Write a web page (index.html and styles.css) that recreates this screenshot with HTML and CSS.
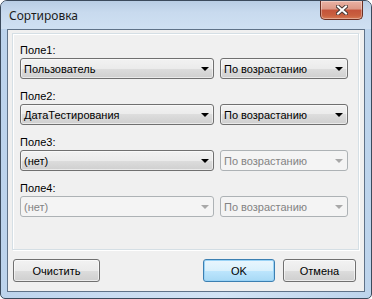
FILE: index.html
```html
<!DOCTYPE html>
<html lang="ru">
<head>
    <meta charset="UTF-8">
    <title>Сортировка</title>
    <link rel="stylesheet" href="styles.css">
</head>
<body>

<div class="window">
    <div class="titlebar">
        <span class="title">Сортировка</span>
        <div class="close-btn">
            <svg width="12" height="10" viewBox="0 0 12 10">
                <path d="M2 1.5 L10 8.5 M10 1.5 L2 8.5" stroke="#4a3a36" stroke-width="4" stroke-linecap="square"/>
                <path d="M2 1.5 L10 8.5 M10 1.5 L2 8.5" stroke="#ffffff" stroke-width="2" stroke-linecap="square"/>
            </svg>
        </div>
    </div>

    <div class="client">
        <div class="panel">
            <div class="field">
                <div class="field-label">Поле1:</div>
                <div class="field-row">
                    <div class="combo combo-wide"><span>Пользователь</span><i class="arrow"></i></div>
                    <div class="combo combo-narrow"><span>По возрастанию</span><i class="arrow"></i></div>
                </div>
            </div>
            <div class="field">
                <div class="field-label">Поле2:</div>
                <div class="field-row">
                    <div class="combo combo-wide"><span>ДатаТестирования</span><i class="arrow"></i></div>
                    <div class="combo combo-narrow"><span>По возрастанию</span><i class="arrow"></i></div>
                </div>
            </div>
            <div class="field">
                <div class="field-label">Поле3:</div>
                <div class="field-row">
                    <div class="combo combo-wide"><span>(нет)</span><i class="arrow"></i></div>
                    <div class="combo combo-narrow disabled"><span>По возрастанию</span><i class="arrow"></i></div>
                </div>
            </div>
            <div class="field">
                <div class="field-label">Поле4:</div>
                <div class="field-row">
                    <div class="combo combo-wide disabled"><span>(нет)</span><i class="arrow"></i></div>
                    <div class="combo combo-narrow disabled"><span>По возрастанию</span><i class="arrow"></i></div>
                </div>
            </div>
        </div>

        <div class="buttons">
            <button class="btn btn-clear">Очистить</button>
            <span class="spacer"></span>
            <button class="btn btn-default btn-ok">OK</button>
            <button class="btn btn-cancel">Отмена</button>
        </div>
    </div>
</div>

</body>
</html>
```

FILE: styles.css
```css
body {
    margin: 0;
    padding: 0;
    background-color: #ffffff;
    font-family: "Liberation Sans", Arial, sans-serif;
    font-size: 11px;
}
.window {
    width: 372px;
    height: 299px;
    box-sizing: border-box;
    border: 1px solid #3b4a5c;
    border-radius: 7px 7px 5px 5px;
    background: linear-gradient(90deg, #bcd3ec 0%, #c9dcf1 30%, #d2e3f4 60%, #bdd4ec 100%);
    display: flex;
    flex-direction: column;
    overflow: hidden;
}
.titlebar {
    height: 28px;
    flex-shrink: 0;
    display: flex;
    align-items: flex-start;
    background: linear-gradient(180deg, #b8cde4 0%, #c8daee 40%, #cfe0f2 100%);
}
.title {
    font-family: "Noto Sans", "Open Sans", sans-serif;
    font-size: 12px;
    color: #1b1b1b;
    margin: 6px 0 0 8px;
}
.close-btn {
    margin-left: auto;
    margin-right: 8px;
    width: 43px;
    height: 19px;
    box-sizing: border-box;
    border: 1px solid #6b2f22;
    border-top: none;
    border-radius: 0 0 5px 5px;
    background: linear-gradient(180deg, #eab2a4 0%, #dc9886 45%, #c4533a 50%, #c9603f 80%, #d77a55 100%);
    box-shadow: inset 0 0 0 1px rgba(255, 255, 255, 0.35);
    display: flex;
    align-items: center;
    justify-content: center;
}
.client {
    flex: 1;
    margin: 0 6px 6px 6px;
    border: 1px solid #5f7288;
    background-color: #f0f0f0;
    display: flex;
    flex-direction: column;
}
.panel {
    height: 217px;
    box-sizing: border-box;
    margin: 3px 5px 0 4px;
    border: 1px solid #d5dfe5;
    box-shadow: inset 1px 1px 0 #ffffff, 1px 1px 0 #ffffff;
    padding: 10px 9px 0 7px;
    display: flex;
    flex-direction: column;
    gap: 11px;
}
.field-label {
    line-height: 13px;
    height: 13px;
    margin-bottom: 1px;
    color: #000;
}
.field-row {
    display: flex;
    gap: 6px;
}
.combo {
    height: 21px;
    box-sizing: border-box;
    border: 1px solid #707070;
    border-radius: 3px;
    background: linear-gradient(180deg, #f2f2f2 0%, #ebebeb 50%, #dddddd 50%, #cfcfcf 100%);
    box-shadow: inset 0 0 0 1px rgba(255, 255, 255, 0.55);
    display: flex;
    align-items: center;
    padding: 0 4px 0 3px;
    color: #000;
}
.combo span {
    flex: 1;
}
.combo-wide {
    width: 194px;
}
.combo-narrow {
    width: 128px;
}
.arrow {
    width: 0;
    height: 0;
    border-left: 4px solid transparent;
    border-right: 4px solid transparent;
    border-top: 4px solid #000;
}
.combo.disabled {
    border-color: #adb2b5;
    background: #f4f4f4;
    box-shadow: none;
    color: #838383;
}
.combo.disabled .arrow {
    border-top-color: #a8a8a8;
}
.buttons {
    display: flex;
    gap: 8px;
    margin-top: 9px;
    padding: 0 8px 0 5px;
}
.spacer {
    flex: 1;
}
.btn {
    height: 23px;
    box-sizing: border-box;
    font-family: "Liberation Sans", Arial, sans-serif;
    font-size: 11px;
    color: #000;
    border: 1px solid #707070;
    border-radius: 3px;
    background: linear-gradient(180deg, #f2f2f2 0%, #ebebeb 50%, #dddddd 50%, #cfcfcf 100%);
    box-shadow: inset 0 0 0 1px rgba(255, 255, 255, 0.6);
    padding: 0;
}
.btn-clear {
    width: 87px;
}
.btn-ok {
    width: 72px;
}
.btn-cancel {
    width: 73px;
}
.btn-default {
    border-color: #3c7fb1;
    background: linear-gradient(180deg, #eaf6fd 0%, #d9f0fc 50%, #bee6fd 50%, #a7d9f5 100%);
    box-shadow: inset 0 0 0 1px #9ad3f6;
}
```
